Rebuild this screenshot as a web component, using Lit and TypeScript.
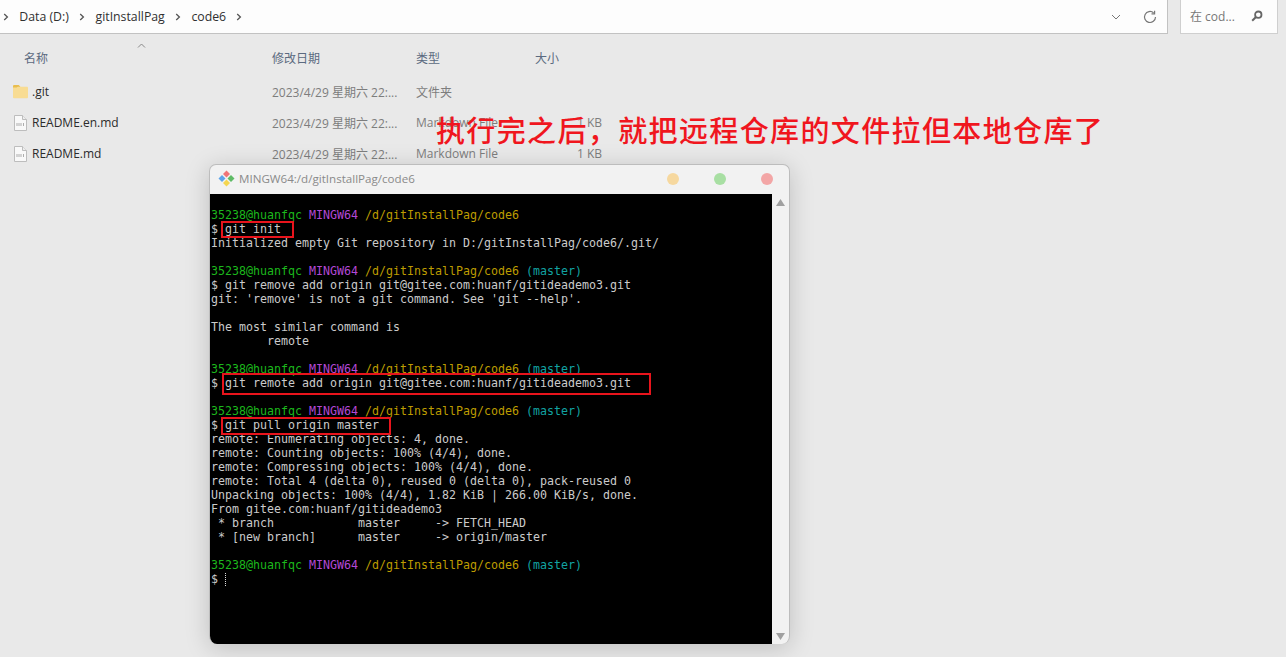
import { LitElement, html, css, svg } from "lit";
import { customElement } from "lit/decorators.js";

type Seg = [string, string];
const G = "g", M = "m", Y = "y", C = "c", T = "t";
const prompt = (branch: boolean): Seg[] => [
  [G, "35238@huanfqc "],
  [M, "MINGW64 "],
  [Y, "/d/gitInstallPag/code6"],
  ...(branch ? ([[T, " "], [C, "(master)"]] as Seg[]) : []),
];
const plain = (s: string): Seg[] => [[T, s]];

const LINES: Seg[][] = [
  prompt(false),
  plain("$ git init"),
  plain("Initialized empty Git repository in D:/gitInstallPag/code6/.git/"),
  [],
  prompt(true),
  plain("$ git remove add origin git@gitee.com:huanf/gitideademo3.git"),
  plain("git: 'remove' is not a git command. See 'git --help'."),
  [],
  plain("The most similar command is"),
  plain("        remote"),
  [],
  prompt(true),
  plain("$ git remote add origin git@gitee.com:huanf/gitideademo3.git"),
  [],
  prompt(true),
  plain("$ git pull origin master"),
  plain("remote: Enumerating objects: 4, done."),
  plain("remote: Counting objects: 100% (4/4), done."),
  plain("remote: Compressing objects: 100% (4/4), done."),
  plain("remote: Total 4 (delta 0), reused 0 (delta 0), pack-reused 0"),
  plain("Unpacking objects: 100% (4/4), 1.82 KiB | 266.00 KiB/s, done."),
  plain("From gitee.com:huanf/gitideademo3"),
  plain(" * branch            master     -> FETCH_HEAD"),
  plain(" * [new branch]      master     -> origin/master"),
  [],
  prompt(true),
  plain("$ "),
];

const BOXES = [{ cls: "b1" }, { cls: "b2" }, { cls: "b3" }];

const FILES = [
  { icon: "folder", name: ".git", date: "2023/4/29 星期六 22:...", type: "文件夹", size: "" },
  { icon: "file", name: "README.en.md", date: "2023/4/29 星期六 22:...", type: "Markdown File", size: "1 KB" },
  { icon: "file", name: "README.md", date: "2023/4/29 星期六 22:...", type: "Markdown File", size: "1 KB" },
];

const folderIcon = svg`<svg width="17" height="15" viewBox="0 0 17 15"><path d="M1 2.5C1 1.6 1.5 1 2.4 1H6.6L8.4 2.7H14.8C15.6 2.7 16 3.2 16 4V13C16 13.8 15.6 14.3 14.8 14.3H2.2C1.4 14.3 1 13.8 1 13Z" fill="#f8dc93"/><path d="M1 2.5C1 1.6 1.5 1 2.4 1H6.6L8.4 2.7H5.8L4.6 3.6H1Z" fill="#e8bd4f"/></svg>`;
const fileIcon = svg`<svg width="13" height="16" viewBox="0 0 13 16"><path d="M.5.5H8.5L12.5 4.5V15.5H.5Z" fill="#f9f9f9" stroke="#bdbdbd"/><path d="M8.5.5V4.5H12.5" fill="#eee" stroke="#bdbdbd"/><path d="M3 8V11M5 8V11M7 8V11M9.5 8V11" stroke="#adadad" stroke-width="1"/></svg>`;
const chevron = svg`<svg width="6" height="8" viewBox="0 0 6 8"><path d="M1.2 1L4.4 4L1.2 7" fill="none" stroke="#555" stroke-width="1.3"/></svg>`;
const gitLogo = svg`<svg width="19" height="19" viewBox="0 0 19 19"><path d="M9.5 1.5L13 5L9.5 8.5L6 5Z" fill="#ef7477"/><path d="M14 6L17.5 9.5L14 13L10.5 9.5Z" fill="#5fbb66"/><path d="M9.5 10.5L13 14L9.5 17.5L6 14Z" fill="#f4d651"/><path d="M5 6L8.5 9.5L5 13L1.5 9.5Z" fill="#5ea5ea"/></svg>`;

@customElement("app-root")
export class AppRoot extends LitElement {
  static styles = css`
    :host {
      display: block;
      position: relative;
      width: 1286px;
      height: 657px;
      overflow: hidden;
      background: #e9e9e9;
      font-family: "Open Sans", "Noto Sans CJK SC", sans-serif;
      font-size: 12px;
      color: #2b2b2b;
    }
    .top {
      display: flex;
      height: 34px;
      gap: 12px;
      padding-right: 8px;
    }
    .crumbs {
      flex: 1;
      display: flex;
      align-items: center;
      padding: 1px 10px 1px 3px;
      background: #fdfdfd;
      border: solid #c2c2c2;
      border-width: 0 1px 1px 0;
      gap: 10.3px;
      font-size: 12.3px;
      color: #303030;
    }
    .crumbs .sp { flex: 1; }
    .tools { display: flex; align-items: center; gap: 22px; }
    .search {
      width: 98px;
      display: flex;
      align-items: center;
      justify-content: space-between;
      padding: 0 14px 2px 9px;
      box-sizing: border-box;
      background: #fdfdfd;
      border: solid #cfcfcf;
      border-width: 0 1px 1px 1px;
      color: #777;
    }
    .grid {
      display: grid;
      grid-template-columns: 248px 144px 119px 67px;
      padding-left: 24px;
      color: #4a4a4a;
    }
    .head {
      height: 42px;
      box-sizing: border-box;
      padding-top: 15px;
      align-items: start;
    }
    .head > span {
      color: #5b6a80;
      font-size: 12px;
      line-height: 20px;
    }
    .sort {
      position: absolute;
      left: 137px;
      top: 43px;
    }
    .rows { display: flex; flex-direction: column; }
    .row {
      height: 31px;
      align-items: center;
      padding-left: 12px;
      grid-template-columns: 260px 144px 119px 67px;
    }
    .row .name { display: flex; align-items: center; color: #2b2b2b; }
    .row .ico {
      width: 20px;
      display: flex;
      align-items: center;
    }
    .row .ico.f { padding-left: 2px; width: 18px; }
    .row .dim { color: #7d7d7d; }
    .row .size { color: #7d7d7d; text-align: right; }

    .note {
      position: absolute;
      left: 436px;
      top: 107px;
      font-family: "Noto Sans CJK SC", sans-serif;
      font-size: 29px;
      line-height: 44px;
      letter-spacing: 1.37px;
      font-weight: 500;
      color: #f0161e;
      white-space: nowrap;
    }
    .win {
      position: absolute;
      left: 209px;
      top: 164px;
      width: 581px;
      height: 480px;
      box-sizing: border-box;
      border: 1px solid #bdbdbd;
      border-bottom: none;
      border-radius: 7px 7px 8px 8px;
      background: #f2f2f2;
      box-shadow: 0 4px 24px rgba(0, 0, 0, 0.18);
      display: flex;
      flex-direction: column;
      overflow: hidden;
    }
    .bar {
      height: 29px;
      flex: none;
      box-sizing: border-box;
      display: flex;
      align-items: center;
      padding: 0 16px 2px 7px;
      color: #8a8a8a;
      font-size: 11.6px;
      gap: 3px;
    }
    .bar .title { flex: 1; }
    .dot { width: 12px; height: 12px; border-radius: 50%; }
    .dots { display: flex; gap: 35px; padding-top: 1px; }
    .d1 { background: #f6d89f; }
    .d2 { background: #a8dfa3; }
    .d3 { background: #f3a6a6; }
    .body { flex: 1; display: flex; min-height: 0; }
    .term {
      position: relative;
      width: 562px;
      flex: none;
      background: #000;
      padding: 14px 0 0 1px;
      box-sizing: border-box;
      font-family: "DejaVu Sans Mono", monospace;
      font-size: 11.63px;
      line-height: 14px;
      color: #cbcbcb;
    }
    .ln { height: 14px; white-space: pre; }
    .g { color: #1cb81c; }
    .m { color: #b348d6; }
    .y { color: #bd9c00; }
    .c { color: #12a3a3; }
    .t { color: #cbcbcb; }
    .cursor {
      display: inline-block;
      width: 1px;
      height: 13px;
      vertical-align: -3px;
      background: repeating-linear-gradient(#ddd 0 1px, transparent 1px 2px);
    }
    .box { position: absolute; border: 2px solid #e8141c; box-sizing: border-box; }
    .b1 { left: 11px; top: 27px; width: 73px; height: 17px; }
    .b2 { left: 12px; top: 179px; width: 429px; height: 22px; }
    .b3 { left: 11px; top: 223px; width: 170px; height: 18px; }
    .scroll {
      flex: 1;
      display: flex;
      flex-direction: column;
      justify-content: space-between;
      align-items: center;
      padding: 5px 0 4px;
    }
  `;

  render() {
    return html`
      <div class="top">
        <div class="crumbs">
          ${chevron}<span>Data (D:)</span>
          ${chevron}<span>gitInstallPag</span>
          ${chevron}<span>code6</span>
          ${chevron}<span class="sp"></span>
          <span class="tools">
            <svg width="10" height="6" viewBox="0 0 10 6"><path d="M1 1L5 5L9 1" fill="none" stroke="#777" stroke-width="1"/></svg>
            <svg width="14" height="14" viewBox="0 0 14 14"><path d="M12.5 7A5.5 5.5 0 1 1 10.6 2.8" fill="none" stroke="#777" stroke-width="1.2"/><path d="M11.6 .8V3.9H8.5" fill="none" stroke="#777" stroke-width="1.2"/></svg>
          </span>
        </div>
        <div class="search">
          <span>在 cod...</span>
          <svg width="12" height="12" viewBox="0 0 12 12"><circle cx="7.3" cy="4.7" r="3.2" fill="none" stroke="#666" stroke-width="1.8"/><path d="M5 7L1.2 10.8" stroke="#666" stroke-width="2"/></svg>
        </div>
      </div>
      <svg class="sort" width="9" height="5" viewBox="0 0 9 5"><path d="M1 4.5L4.5 1L8 4.5" fill="none" stroke="#888" stroke-width="1"/></svg>
      <div class="grid head">
        <span>名称</span><span>修改日期</span><span>类型</span><span>大小</span>
      </div>
      <div class="rows">
        ${FILES.map(
          (f) => html`<div class="grid row">
            <span class="name">
              <span class="ico ${f.icon === "file" ? "f" : ""}">${f.icon === "folder" ? folderIcon : fileIcon}</span>${f.name}
            </span>
            <span class="dim">${f.date}</span>
            <span class="dim">${f.type}</span>
            <span class="size">${f.size}</span>
          </div>`
        )}
      </div>
      <div class="win">
        <div class="bar">
          ${gitLogo}<span class="title">MINGW64:/d/gitInstallPag/code6</span>
          <span class="dots"><span class="dot d1"></span><span class="dot d2"></span><span class="dot d3"></span></span>
        </div>
        <div class="body">
          <div class="term">
            ${LINES.map(
              (l, i) => html`<div class="ln">${l.map(([c, s]) => html`<span class=${c}>${s}</span>`)}${i === LINES.length - 1 ? html`<span class="cursor"></span>` : ""}</div>`
            )}
            ${BOXES.map((b) => html`<div class="box ${b.cls}"></div>`)}
          </div>
          <div class="scroll">
            <svg width="9" height="7" viewBox="0 0 9 7"><path d="M4.5 0L9 7H0Z" fill="#a0a0a0"/></svg>
            <svg width="9" height="7" viewBox="0 0 9 7"><path d="M0 0H9L4.5 7Z" fill="#a0a0a0"/></svg>
          </div>
        </div>
      </div>
      <div class="note">执行完之后，就把远程仓库的文件拉但本地仓库了</div>
    `;
  }
}
